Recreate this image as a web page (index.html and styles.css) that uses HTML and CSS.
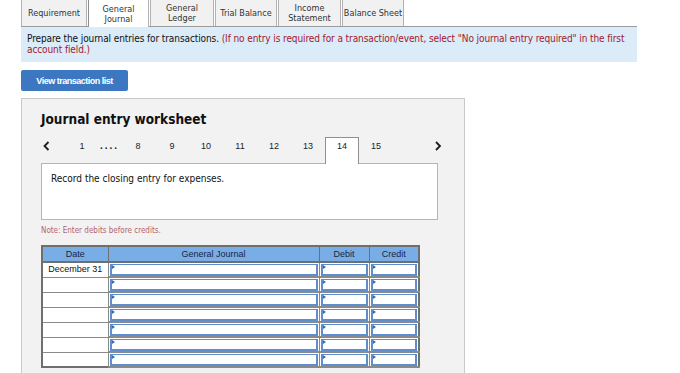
FILE: index.html
```html
<!DOCTYPE html>
<html lang="en">
<head>
    <meta charset="UTF-8">
    <meta name="viewport" content="width=device-width, initial-scale=1.0">
    <title>Journal entry worksheet</title>
    <link rel="stylesheet" href="styles.css">
</head>
<body>

<div class="page">

    <!-- Requirement tabs -->
    <ul class="tabs">
        <li class="tab tab-req">Requirement</li>
        <li class="tab tab-gj active">General<br>Journal</li>
        <li class="tab tab-gl">General<br>Ledger</li>
        <li class="tab tab-tb">Trial Balance</li>
        <li class="tab tab-is">Income<br>Statement</li>
        <li class="tab tab-bs">Balance Sheet</li>
    </ul>

    <div class="info">
        Prepare the journal entries for transactions. <span class="hint">(If no entry is required for a transaction/event, select "No journal entry required" in the first account field.)</span>
    </div>

    <button class="list-button">View transaction list</button>

    <div class="worksheet">
        <h2 class="worksheet-title">Journal entry worksheet</h2>

        <div class="pager">
            <span class="pager-arrow prev">
                <svg width="8" height="10" viewBox="0 0 8 10"><polyline points="5.5,1 1.5,5 5.5,9" fill="none" stroke="#1d1d1d" stroke-width="1.8"/></svg>
            </span>
            <span class="pager-num">1</span>
            <span class="pager-dots">....</span>
            <span class="pager-num">8</span>
            <span class="pager-num">9</span>
            <span class="pager-num">10</span>
            <span class="pager-num">11</span>
            <span class="pager-num">12</span>
            <span class="pager-num">13</span>
            <span class="pager-num current">14</span>
            <span class="pager-num">15</span>
            <span class="pager-arrow next">
                <svg width="8" height="10" viewBox="0 0 8 10"><polyline points="2,1 6,5 2,9" fill="none" stroke="#1d1d1d" stroke-width="1.8"/></svg>
            </span>
        </div>

        <div class="prompt">Record the closing entry for expenses.</div>

        <p class="note">Note: Enter debits before credits.</p>

        <table class="journal">
            <colgroup>
                <col class="col-date">
                <col class="col-account">
                <col class="col-amount">
                <col class="col-amount">
            </colgroup>
            <thead>
                <tr>
                    <th>Date</th>
                    <th>General Journal</th>
                    <th>Debit</th>
                    <th>Credit</th>
                </tr>
            </thead>
            <tbody>
                <tr>
                    <td class="date">December 31</td>
                    <td class="entry"><div class="field"></div></td>
                    <td class="entry"><div class="field"></div></td>
                    <td class="entry"><div class="field"></div></td>
                </tr>
                <tr>
                    <td class="date"></td>
                    <td class="entry"><div class="field"></div></td>
                    <td class="entry"><div class="field"></div></td>
                    <td class="entry"><div class="field"></div></td>
                </tr>
                <tr>
                    <td class="date"></td>
                    <td class="entry"><div class="field"></div></td>
                    <td class="entry"><div class="field"></div></td>
                    <td class="entry"><div class="field"></div></td>
                </tr>
                <tr>
                    <td class="date"></td>
                    <td class="entry"><div class="field"></div></td>
                    <td class="entry"><div class="field"></div></td>
                    <td class="entry"><div class="field"></div></td>
                </tr>
                <tr>
                    <td class="date"></td>
                    <td class="entry"><div class="field"></div></td>
                    <td class="entry"><div class="field"></div></td>
                    <td class="entry"><div class="field"></div></td>
                </tr>
                <tr>
                    <td class="date"></td>
                    <td class="entry"><div class="field"></div></td>
                    <td class="entry"><div class="field"></div></td>
                    <td class="entry"><div class="field"></div></td>
                </tr>
                <tr>
                    <td class="date"></td>
                    <td class="entry"><div class="field"></div></td>
                    <td class="entry"><div class="field"></div></td>
                    <td class="entry"><div class="field"></div></td>
                </tr>
            </tbody>
        </table>
    </div>
</div>

</body>
</html>
```

FILE: styles.css
```css
/* Basic Reset */
* {
    margin: 0;
    padding: 0;
    box-sizing: border-box;
}

body {
    font-family: "DejaVu Sans Condensed", "DejaVu Sans", sans-serif;
    font-stretch: condensed;
    font-size: 10px;
    color: #222;
    background-color: #fff;
    overflow: hidden;
}

.page {
    padding-left: 21px;
}

/* Tabs */
.tabs {
    display: flex;
    list-style: none;
    width: 616px;
    height: 27px;
    border-bottom: 1px solid #9c9c9c;
}

.tab {
    height: 26px;
    margin-right: 1px;
    border-left: 1px solid #b2b2b2;
    border-right: 1px solid #b2b2b2;
    background-color: #f1f1f1;
    color: #333;
    display: flex;
    align-items: center;
    justify-content: center;
    text-align: center;
    font-size: 9px;
    line-height: 10px;
    white-space: nowrap;
}

.tab.active {
    background-color: #fff;
    height: 27px;
    border-left-color: #8c8c8c;
}

.tab-req { width: 66px; }
.tab-gj { width: 61px; }
.tab-gl { width: 64px; }
.tab-tb { width: 62px; }
.tab-is { width: 63px; }
.tab-bs { width: 62px; }

/* Instructions */
.info {
    width: 616px;
    height: 35px;
    padding: 6px 6px;
    line-height: 11px;
    letter-spacing: -0.1px;
    background-color: #dbebf8;
    color: #111;
}

.hint {
    color: #a3182e;
}

.list-button {
    display: block;
    margin-top: 8px;
    width: 107px;
    height: 21px;
    border: none;
    border-radius: 2px;
    background-color: #3c78c1;
    color: #fff;
    font-family: "Liberation Sans", Arial, sans-serif;
    font-weight: bold;
    font-size: 9px;
    letter-spacing: -0.5px;
}

/* Worksheet panel */
.worksheet {
    margin-top: 7px;
    width: 444px;
    height: 300px;
    padding: 12px 0 0 19px;
    background-color: #f2f2f2;
    border: 1px solid #c9c9c9;
}

.worksheet-title {
    font-size: 13.5px;
    line-height: 16px;
    font-weight: bold;
    color: #111;
}

.pager {
    display: flex;
    align-items: flex-start;
    margin-top: 10px;
    width: 401px;
    height: 26px;
    font-family: "Liberation Sans", Arial, sans-serif;
    font-stretch: normal;
    font-size: 9px;
    color: #222;
}

.pager-arrow {
    height: 18px;
    display: flex;
    align-items: center;
}

.pager-arrow.prev {
    width: 24px;
    padding-left: 2px;
}

.pager-arrow.next {
    margin-left: auto;
}

.pager-num {
    width: 34px;
    line-height: 18px;
    text-align: center;
}

.pager-dots {
    width: 22px;
    padding-left: 1px;
    font-size: 10px;
    line-height: 18px;
    font-weight: bold;
    letter-spacing: 2px;
}

.pager-num.current {
    position: relative;
    z-index: 1;
    height: 27px;
    background-color: #fff;
    border: 1px solid #8f8f8f;
    border-bottom: none;
    line-height: 16px;
}

.prompt {
    width: 397px;
    height: 57px;
    padding: 9px 9px;
    line-height: 12px;
    background-color: #fff;
    border: 1px solid #b5b5b5;
    color: #111;
}

.note {
    margin-top: 6px;
    font-size: 8px;
    line-height: 10px;
    color: #b3646e;
}

/* Journal table */
.journal {
    margin-top: 9px;
    width: 378px;
    table-layout: fixed;
    border-collapse: collapse;
    border: 2px solid #6f6f6f;
    font-family: "Liberation Sans", Arial, sans-serif;
    font-stretch: normal;
    font-size: 9px;
}

.col-date { width: 66px; }
.col-account { width: 211px; }
.col-amount { width: 50px; }

.journal th {
    height: 16px;
    padding: 0;
    background-color: #79ade6;
    color: #1b2443;
    font-weight: normal;
    border: 1px solid #6f6f6f;
    border-bottom-width: 2px;
}

.journal td {
    height: 13px;
    padding: 0;
    background-color: #fff;
    border: 1px solid #8a8a8a;
    line-height: 11px;
}

.journal td.date {
    text-align: center;
    color: #111;
}

.journal td.entry {
    padding: 1px 1px 0 1px;
    border-bottom: 2px solid #8a8a8a;
}

.field {
    position: relative;
    height: 12px;
    border: 2px solid #5e8ecd;
    border-top-width: 1px;
    background-color: #fff;
}

.field::before {
    content: "";
    position: absolute;
    top: 0;
    left: 0;
    border-top: 2px solid transparent;
    border-bottom: 2px solid transparent;
    border-left: 3px solid #2f6cc0;
}
```
